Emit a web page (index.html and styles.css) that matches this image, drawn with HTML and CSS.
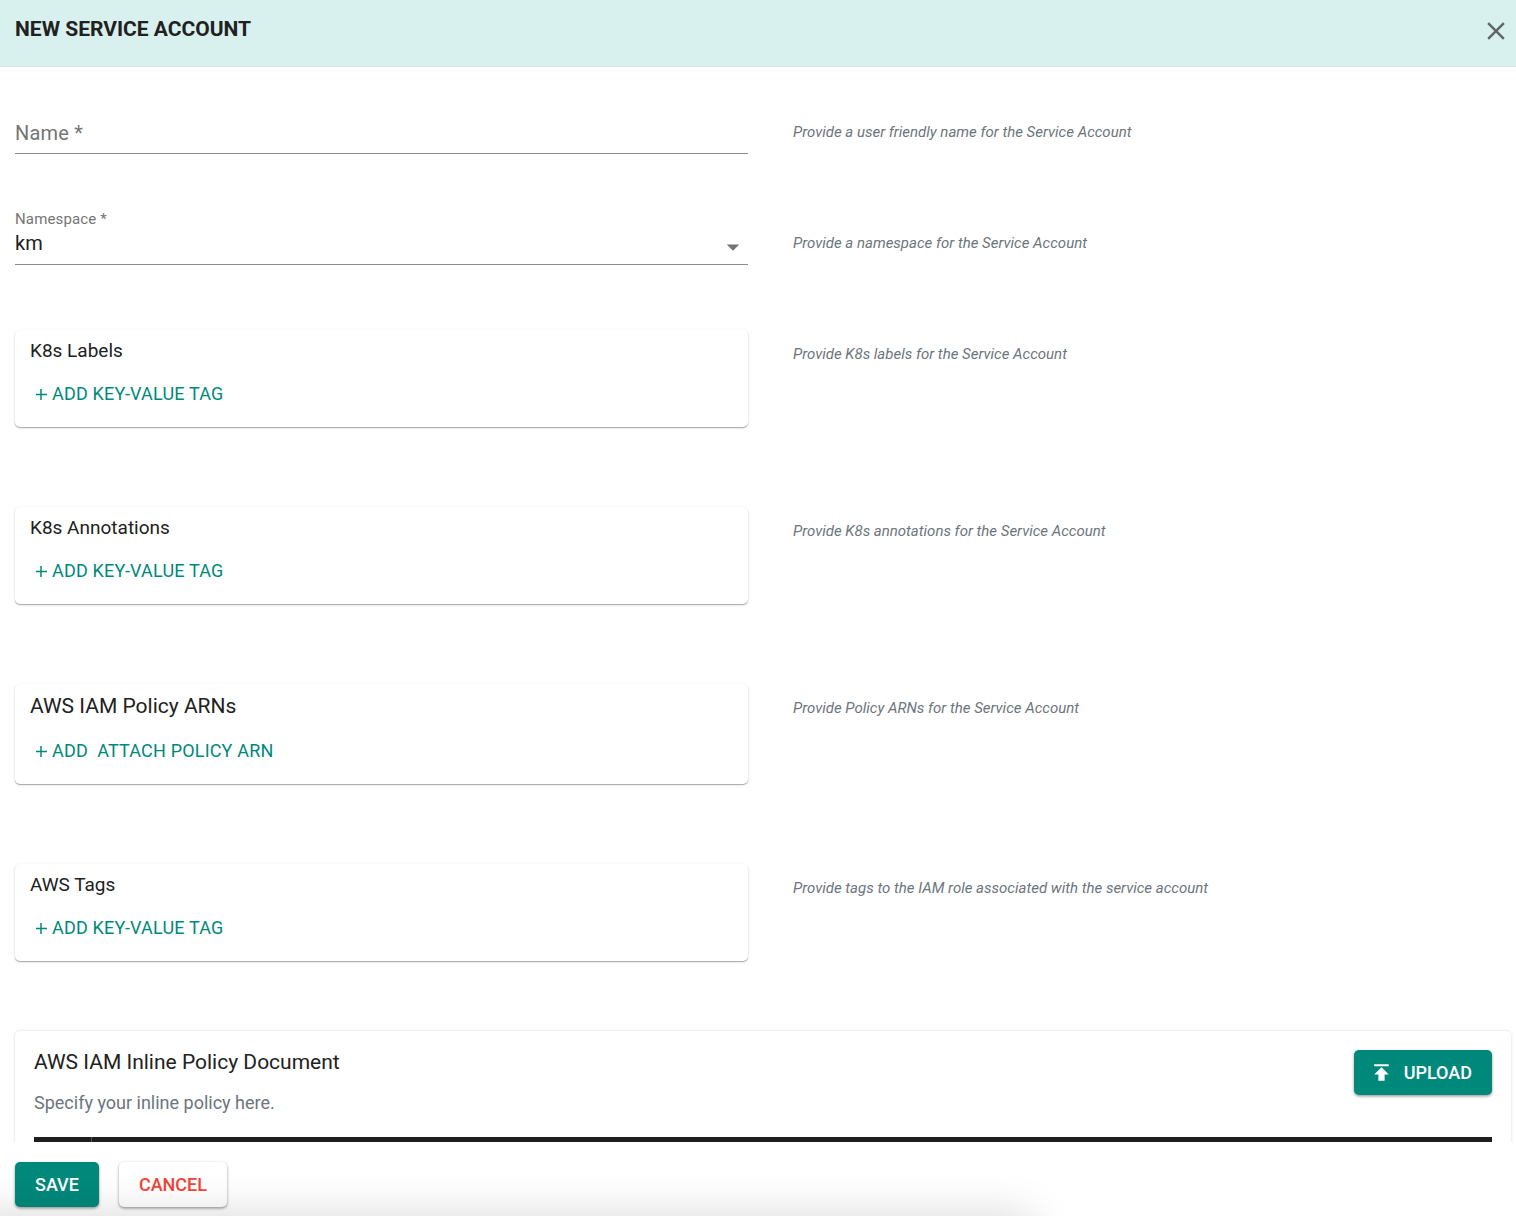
FILE: index.html
```html
<!DOCTYPE html>
<html lang="en">
<head>
<meta charset="utf-8">
<meta name="viewport" content="width=device-width, initial-scale=1">
<title>New Service Account</title>
<link rel="stylesheet" href="styles.css">
</head>
<body>
<form class="dialog">
  <header class="dialog-header">
    <h1 class="dialog-title">NEW SERVICE ACCOUNT</h1>
    <button type="button" class="close-button" aria-label="Close">
      <svg width="30" height="30" viewBox="0 0 24 24" fill="currentColor" aria-hidden="true"><path d="M19 6.41L17.59 5 12 10.59 6.41 5 5 6.41 10.59 12 5 17.59 6.41 19 12 13.41 17.59 19 19 17.59 13.41 12z"/></svg>
    </button>
  </header>

  <main class="dialog-body">
    <div class="row field-row">
      <div class="field field-empty">
        <label class="field-label" for="name">Name *</label>
        <input class="field-control" id="name" type="text" required aria-describedby="name-hint">
      </div>
      <p class="hint" id="name-hint">Provide a user friendly name for the Service Account</p>
    </div>

    <div class="row field-row">
      <div class="field field-filled">
        <label class="field-label" for="namespace">Namespace *</label>
        <select class="field-control" id="namespace" required aria-describedby="namespace-hint">
          <option>km</option>
        </select>
        <svg class="field-arrow" width="30" height="30" viewBox="0 0 24 24" fill="currentColor" aria-hidden="true"><path d="M7 10l5 5 5-5z"/></svg>
      </div>
      <p class="hint" id="namespace-hint">Provide a namespace for the Service Account</p>
    </div>

    <div class="row card-row">
      <section class="card">
        <h2 class="card-title">K8s Labels</h2>
        <button type="button" class="add-button"><svg class="plus" width="12" height="12" viewBox="0 0 12 12" stroke="currentColor" aria-hidden="true"><path d="M6 1v11M1 6.500h11" stroke-width="1.500"/></svg>ADD KEY-VALUE TAG</button>
      </section>
      <p class="hint">Provide K8s labels for the Service Account</p>
    </div>

    <div class="row card-row">
      <section class="card">
        <h2 class="card-title">K8s Annotations</h2>
        <button type="button" class="add-button"><svg class="plus" width="12" height="12" viewBox="0 0 12 12" stroke="currentColor" aria-hidden="true"><path d="M6 1v11M1 6.500h11" stroke-width="1.500"/></svg>ADD KEY-VALUE TAG</button>
      </section>
      <p class="hint">Provide K8s annotations for the Service Account</p>
    </div>

    <div class="row card-row">
      <section class="card">
        <h2 class="card-title card-title-large">AWS IAM Policy ARNs</h2>
        <button type="button" class="add-button"><svg class="plus" width="12" height="12" viewBox="0 0 12 12" stroke="currentColor" aria-hidden="true"><path d="M6 1v11M1 6.500h11" stroke-width="1.500"/></svg>ADD &nbsp;ATTACH POLICY ARN</button>
      </section>
      <p class="hint">Provide Policy ARNs for the Service Account</p>
    </div>

    <div class="row card-row">
      <section class="card">
        <h2 class="card-title">AWS Tags</h2>
        <button type="button" class="add-button"><svg class="plus" width="12" height="12" viewBox="0 0 12 12" stroke="currentColor" aria-hidden="true"><path d="M6 1v11M1 6.500h11" stroke-width="1.500"/></svg>ADD KEY-VALUE TAG</button>
      </section>
      <p class="hint">Provide tags to the IAM role associated with the service account</p>
    </div>

    <section class="policy">
      <div class="policy-header">
        <div>
          <h2 class="policy-title">AWS IAM Inline Policy Document</h2>
          <p class="policy-text">Specify your inline policy here.</p>
        </div>
        <button type="button" class="button button-primary button-upload">
          <svg width="25" height="25" viewBox="0 0 24 24" fill="currentColor" aria-hidden="true"><path d="M5 4v2h14V4H5zm0 10h4v6h6v-6h4l-7-7-7 7z"/></svg>
          UPLOAD
        </button>
      </div>
      <div class="editor"><div class="editor-gutter"></div></div>
    </section>
  </main>

  <footer class="dialog-footer">
    <button type="submit" class="button button-primary">SAVE</button>
    <button type="button" class="button button-cancel">CANCEL</button>
  </footer>
</form>
</body>
</html>
```

FILE: styles.css
```css
* {
  box-sizing: border-box;
}

body {
  margin: 0;
  background: #fff;
  color: #212121;
  font-family: Roboto, "Liberation Sans", sans-serif;
  overflow: hidden;
}

h1, h2, p {
  margin: 0;
}

button, input, select {
  font-family: inherit;
}

.dialog {
  display: flex;
  flex-direction: column;
  height: 100vh;
}

/* Header */

.dialog-header {
  display: flex;
  justify-content: space-between;
  align-items: flex-start;
  flex: none;
  padding: 16px 5px 20px 15px;
  background: #d9f1ee;
  border-bottom: 1px solid #e0e0e0;
}

.dialog-title {
  font-size: 21px;
  line-height: 26px;
  font-weight: 700;
}

.close-button {
  display: flex;
  padding: 0;
  border: 0;
  background: none;
  color: #616769;
  cursor: pointer;
}

/* Form rows */

.dialog-body {
  flex: 1;
  min-height: 0;
  overflow: hidden;
  padding: 25px 15px 0;
}

.row {
  display: grid;
  grid-template-columns: 1fr 1fr;
  column-gap: 20px;
  align-items: start;
}

.field-row {
  margin-bottom: 49px;
}

.card-row {
  margin: 65px 0 80px;
}

.card-row + .card-row {
  margin-top: 0;
}

.hint {
  padding: 14px 0 0 25px;
  color: #6c757d;
  font-size: 15px;
  line-height: 20px;
  font-style: italic;
}

.field-row .hint {
  padding-top: 30px;
}

/* Text fields */

.field {
  display: grid;
  grid-template-rows: 22px 38px;
  padding-top: 1px;
  border-bottom: 1px solid #8c8c8c;
}

.field-label {
  grid-area: 1 / 1;
  padding-top: 5px;
  color: #757575;
  font-size: 15px;
  line-height: 20px;
  letter-spacing: 0.01em;
}

.field-control {
  grid-area: 2 / 1;
  width: 100%;
  padding: 0 30px 5px 0;
  border: 0;
  outline: 0;
  background: none;
  color: #212121;
  font-size: 20px;
  line-height: 24px;
  letter-spacing: 0.01em;
  appearance: none;
}

.field-empty .field-label {
  grid-area: 2 / 1;
  padding-top: 6px;
  font-size: 20px;
  line-height: 24px;
  pointer-events: none;
}

.field-arrow {
  grid-area: 2 / 1;
  justify-self: end;
  align-self: center;
  margin-top: 3px;
  color: #757575;
  pointer-events: none;
}

/* Cards */

.card {
  padding: 10px 15px 13px;
  border-radius: 5px;
  background: #fff;
  box-shadow: 0 1px 1px rgba(0, 0, 0, 0.28), 0 1px 3px rgba(0, 0, 0, 0.12);
}

.card-title {
  font-size: 19px;
  line-height: 22px;
  font-weight: 400;
}

.card-title-large {
  font-size: 21px;
  line-height: 25px;
}

.add-button {
  display: flex;
  align-items: center;
  gap: 5px;
  margin-top: 12px;
  padding: 10px 5px;
  border: 0;
  background: none;
  color: #00897b;
  font-size: 18px;
  line-height: 20px;
  letter-spacing: 0.01em;
  cursor: pointer;
}

/* Inline policy */

.policy {
  margin: -10px -10px 0 0;
  padding: 19px 19px 0;
  border-radius: 5px;
  box-shadow: 0 0 3px rgba(0, 0, 0, 0.16);
}

.policy-header {
  display: flex;
  justify-content: space-between;
  align-items: flex-start;
  margin-bottom: 22px;
}

.policy-title {
  font-size: 21px;
  line-height: 25px;
  font-weight: 400;
}

.policy-text {
  margin-top: 16px;
  color: #6c757d;
  font-size: 18px;
  line-height: 24px;
}

.editor {
  height: 375px;
  background: #1e1e1e;
}

.editor-gutter {
  width: 58px;
  height: 100%;
  border-right: 1px solid #555;
}

/* Buttons */

.button {
  display: flex;
  align-items: center;
  height: 45px;
  padding: 0 20px;
  border: 0;
  border-radius: 5px;
  font-size: 18px;
  font-weight: 500;
  line-height: 24px;
  box-shadow: 0 1px 3px rgba(0, 0, 0, 0.3), 0 2px 3px rgba(0, 0, 0, 0.14);
  cursor: pointer;
}

.button-primary {
  background: #00897b;
  color: #fff;
}

.button-upload {
  gap: 10px;
  padding-left: 15px;
}

.button-cancel {
  background: #fff;
  color: #f44336;
}

/* Footer */

.dialog-footer {
  position: relative;
  display: flex;
  flex: none;
  gap: 20px;
  padding: 20px 15px 9px;
  background: #fff;
  overflow: hidden;
}

.dialog-footer::after {
  content: "";
  position: absolute;
  top: 100%;
  left: -50px;
  right: 32%;
  height: 50px;
  box-shadow: 0 0 45px rgba(0, 0, 0, 0.16);
  pointer-events: none;
}
```
